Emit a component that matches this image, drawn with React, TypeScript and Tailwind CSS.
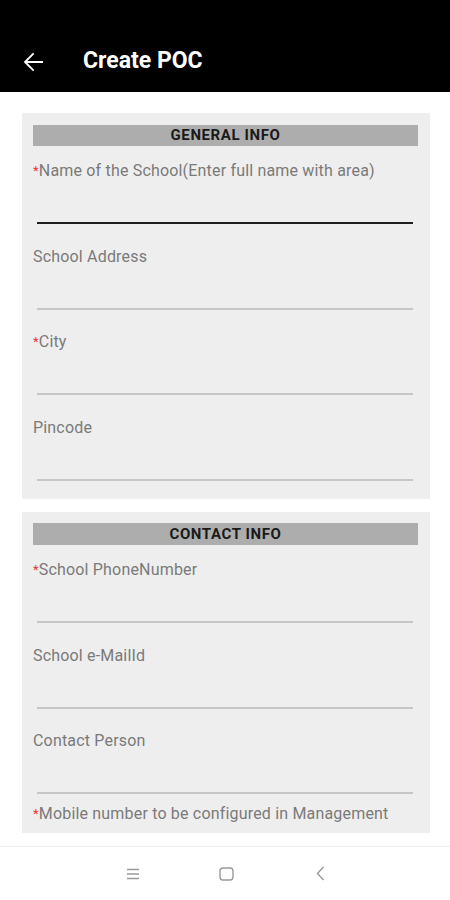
import { ReactNode } from "react";

type Field = { label: string; required?: boolean; focused?: boolean };

const generalFields: Field[] = [
  { label: "Name of the School(Enter full name with area)", required: true, focused: true },
  { label: "School Address" },
  { label: "City", required: true },
  { label: "Pincode" },
];

const contactFields: Field[] = [
  { label: "School PhoneNumber", required: true },
  { label: "School e-MailId" },
  { label: "Contact Person" },
];

function Label({ text, required }: { text: string; required?: boolean }) {
  return (
    <p className="text-[16px] leading-[20px] text-[#7a7a7a] tracking-[0.18px] whitespace-nowrap">
      {required && <span className="text-[#e53935] text-[13px] align-top">*</span>}
      {text}
    </p>
  );
}

function InputField({ field }: { field: Field }) {
  return (
    <div className="pt-[15px] pb-[7.5px]">
      <Label text={field.label} required={field.required} />
      <div
        className={
          field.focused
            ? "mt-[41px] ml-[4px] mr-[5px] h-[2px] bg-[#1e1e1e]"
            : "mt-[41px] ml-[4px] mr-[5px] h-[2px] bg-[#c6c6c6]"
        }
      />
    </div>
  );
}

function Section({ title, top, barHeight, children }: { title: string; top: string; barHeight: string; children: ReactNode }) {
  return (
    <section className={`bg-[#eeeeee] pl-[11px] pr-[12px] ${top}`}>
      <div className={`${barHeight} bg-[#adadad] flex items-center justify-center text-[15px] font-bold text-[#1a1a1a] tracking-[0.6px]`}>
        {title}
      </div>
      {children}
    </section>
  );
}

export default function App() {
  return (
    <div className="w-[450px] h-[900px] bg-white flex flex-col overflow-hidden" style={{ fontFamily: "Roboto, 'Liberation Sans', sans-serif" }}>
      {/* Toolbar */}
      <header className="bg-black pt-[31px] h-[92px] shrink-0">
        <div className="h-[61px] flex items-center">
          <svg className="ml-[18px]" width="30" height="30" viewBox="0 0 24 24" fill="#ffffff">
            <path d="M20 11.15H7.5l5.55-5.55L12 4.55 4.55 12 12 19.45l1.05-1.05-5.55-5.55H20z" />
          </svg>
          <h1 className="ml-[35px] text-[23px] font-bold text-white">Create POC</h1>
        </div>
      </header>

      <main className="flex-1 pl-[22px] pr-[20px] pt-[21px] flex flex-col gap-[13px]">
        <Section title="GENERAL INFO" top="pt-[12px]" barHeight="h-[21px]">
          {generalFields.map((f) => (
            <InputField key={f.label} field={f} />
          ))}
          <div className="h-[11px]" />
        </Section>

        <Section title="CONTACT INFO" top="pt-[11px]" barHeight="h-[22px]">
          {contactFields.map((f) => (
            <InputField key={f.label} field={f} />
          ))}
          <div className="pt-[2.5px] pb-[9px]">
            <Label text="Mobile number to be configured in Management" required />
          </div>
        </Section>
      </main>

      {/* System navigation bar */}
      <nav className="h-[54px] shrink-0 border-t border-[#f0f0f0] bg-white flex items-center">
        <div className="w-full flex items-center">
          <svg className="ml-[126px]" width="14" height="12" viewBox="0 0 14 12" stroke="#9a9a9a" strokeWidth="1.3" fill="none">
            <path d="M1 1.5h12M1 6h12M1 10.5h12" />
          </svg>
          <svg className="ml-[79px]" width="15" height="14" viewBox="0 0 15 14" stroke="#9a9a9a" strokeWidth="1.4" fill="none">
            <rect x="1" y="1" width="13" height="12" rx="3" />
          </svg>
          <svg className="ml-[82px]" width="9" height="15" viewBox="0 0 9 15" stroke="#9a9a9a" strokeWidth="1.4" fill="none">
            <path d="M7.5 1L1.5 7.5l6 6.5" />
          </svg>
        </div>
      </nav>
    </div>
  );
}
